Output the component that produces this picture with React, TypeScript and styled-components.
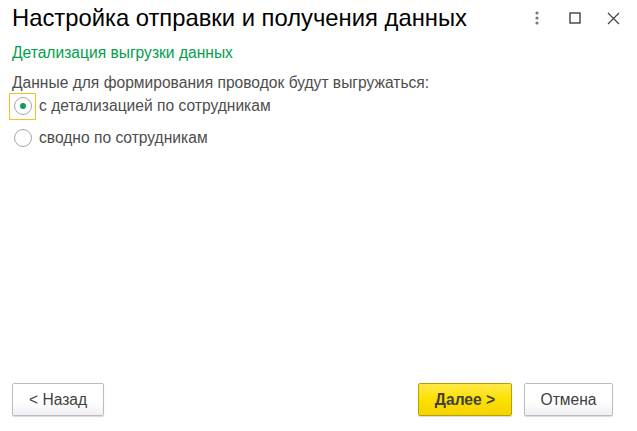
import React, { useState } from 'react'
import styled, { createGlobalStyle } from 'styled-components'

const GlobalStyle = createGlobalStyle`
  html, body {
    margin: 0;
    padding: 0;
    background: #fff;
  }
  body {
    font-family: 'Liberation Sans', Arial, sans-serif;
    color: #333;
  }
`

const Window = styled.div`
  width: 637px;
  height: 431px;
  display: flex;
  flex-direction: column;
  box-sizing: border-box;
  background: #fff;
`

const TitleBar = styled.div`
  display: flex;
  align-items: center;
  height: 36px;
  padding: 0 16px 0 12px;
  box-sizing: border-box;
`

const Title = styled.h1`
  flex: 1;
  margin: 0;
  font-size: 23.8px;
  font-weight: normal;
  color: #000;
  white-space: nowrap;
`

const TitleIcons = styled.div`
  display: flex;
  align-items: center;
  gap: 22px;
`

const IconButton = styled.div`
  width: 16px;
  height: 16px;
  display: flex;
  align-items: center;
  justify-content: center;
`

const Content = styled.div`
  flex: 1;
  padding: 7px 12px 0 12px;
  display: flex;
  flex-direction: column;
`

const SectionTitle = styled.div`
  font-size: 15.6px;
  color: #00a04b;
  line-height: 20px;
`

const Label = styled.div`
  font-size: 15.6px;
  color: #4d4d4d;
  margin-top: 10px;
  line-height: 20px;
`

const RadioGroup = styled.div`
  display: flex;
  flex-direction: column;
  margin: -3px 0 0 -3px;
`

const RadioRow = styled.label`
  display: flex;
  align-items: center;
  height: 32px;
  font-size: 15.6px;
  color: #4d4d4d;
  cursor: pointer;
`

const Focus = styled.span<{ $active: boolean }>`
  width: 25px;
  height: 25px;
  display: flex;
  align-items: center;
  justify-content: center;
  border: 1px solid ${(p) => (p.$active ? '#f2c31e' : 'transparent')};
  margin-right: 3px;
`

const Circle = styled.span<{ $checked: boolean }>`
  width: 16px;
  height: 16px;
  border-radius: 50%;
  border: 1px solid #a6a6a6;
  background: #fff;
  display: flex;
  align-items: center;
  justify-content: center;

  &::after {
    content: '';
    width: 6px;
    height: 6px;
    border-radius: 50%;
    background: ${(p) => (p.$checked ? '#0f9d58' : 'transparent')};
  }
`

const Footer = styled.div`
  display: flex;
  align-items: center;
  padding: 0 24px 15px 12px;
`

const Spacer = styled.div`
  flex: 1;
`

const Button = styled.button<{ $primary?: boolean; $w: number }>`
  width: ${(p) => p.$w}px;
  height: 33px;
  font-family: 'Liberation Sans', Arial, sans-serif;
  font-size: 15.6px;
  font-weight: ${(p) => (p.$primary ? 'bold' : 'normal')};
  color: #404040;
  border-radius: 2px;
  border: 1px solid ${(p) => (p.$primary ? '#b8a200' : '#bcbcbc')};
  background: ${(p) =>
    p.$primary
      ? 'linear-gradient(#ffe94a, #fde000 50%, #f5d300)'
      : 'linear-gradient(#ffffff, #ffffff 55%, #f1eff4)'};
  box-shadow: 0 1px 1px rgba(0, 0, 0, 0.15);
  padding: 0;
  cursor: pointer;

  & + & {
    margin-left: 12px;
  }
`

const options = ['с детализацией по сотрудникам', 'сводно по сотрудникам']

export default function App() {
  const [selected, setSelected] = useState(0)

  return (
    <>
      <GlobalStyle />
      <Window>
        <TitleBar>
          <Title>Настройка отправки и получения данных</Title>
          <TitleIcons>
            <IconButton>
              <svg width="4" height="14" viewBox="0 0 4 14">
                <circle cx="2" cy="2" r="1.6" fill="#7a7a7a" />
                <circle cx="2" cy="7" r="1.6" fill="#7a7a7a" />
                <circle cx="2" cy="12" r="1.6" fill="#7a7a7a" />
              </svg>
            </IconButton>
            <IconButton>
              <svg width="12" height="12" viewBox="0 0 12 12">
                <rect x="1" y="1" width="10" height="10" fill="none" stroke="#333" strokeWidth="1.3" />
              </svg>
            </IconButton>
            <IconButton>
              <svg width="13" height="13" viewBox="0 0 13 13">
                <path d="M1 1 L12 12 M12 1 L1 12" stroke="#444" strokeWidth="1.2" />
              </svg>
            </IconButton>
          </TitleIcons>
        </TitleBar>
        <Content>
          <SectionTitle>Детализация выгрузки данных</SectionTitle>
          <Label>Данные для формирования проводок будут выгружаться:</Label>
          <RadioGroup>
            {options.map((o, i) => (
              <RadioRow key={o} onClick={() => setSelected(i)}>
                <Focus $active={i === 0}>
                  <Circle $checked={selected === i} />
                </Focus>
                {o}
              </RadioRow>
            ))}
          </RadioGroup>
        </Content>
        <Footer>
          <Button $w={92}>&lt; Назад</Button>
          <Spacer />
          <Button $primary $w={94}>Далее &gt;</Button>
          <Button $w={89}>Отмена</Button>
        </Footer>
      </Window>
    </>
  )
}
